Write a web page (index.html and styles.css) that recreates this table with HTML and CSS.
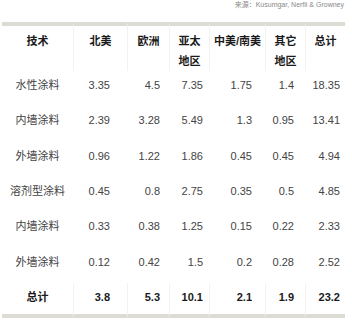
FILE: index.html
```html
<!DOCTYPE html>
<html lang="zh-CN">
<head>
    <meta charset="UTF-8">
    <meta name="viewport" content="width=device-width, initial-scale=1.0">
    <title>涂料市场</title>
    <link rel="stylesheet" href="styles.css">
</head>
<body>
    <div class="source">来源：Kusumgar, Nerfli &amp; Growney</div>
    <table class="market">
        <colgroup>
            <col class="c-tech">
            <col class="c-na">
            <col class="c-eu">
            <col class="c-ap">
            <col class="c-la">
            <col class="c-ot">
            <col class="c-sum">
        </colgroup>
        <thead>
            <tr>
                <th>技术</th>
                <th>北美</th>
                <th>欧洲</th>
                <th>亚太<br>地区</th>
                <th>中美/南美</th>
                <th>其它<br>地区</th>
                <th>总计</th>
            </tr>
        </thead>
        <tbody>
            <tr><td>水性涂料</td><td>3.35</td><td>4.5</td><td>7.35</td><td>1.75</td><td>1.4</td><td>18.35</td></tr>
            <tr><td>内墙涂料</td><td>2.39</td><td>3.28</td><td>5.49</td><td>1.3</td><td>0.95</td><td>13.41</td></tr>
            <tr><td>外墙涂料</td><td>0.96</td><td>1.22</td><td>1.86</td><td>0.45</td><td>0.45</td><td>4.94</td></tr>
            <tr><td>溶剂型涂料</td><td>0.45</td><td>0.8</td><td>2.75</td><td>0.35</td><td>0.5</td><td>4.85</td></tr>
            <tr><td>内墙涂料</td><td>0.33</td><td>0.38</td><td>1.25</td><td>0.15</td><td>0.22</td><td>2.33</td></tr>
            <tr><td>外墙涂料</td><td>0.12</td><td>0.42</td><td>1.5</td><td>0.2</td><td>0.28</td><td>2.52</td></tr>
            <tr class="total"><td>总计</td><td>3.8</td><td>5.3</td><td>10.1</td><td>2.1</td><td>1.9</td><td>23.2</td></tr>
        </tbody>
    </table>
</body>
</html>
```
FILE: styles.css
```css
body {
    margin: 0;
    padding: 0 7px 0 2px;
    background-color: #fff;
    font-family: "Liberation Sans", "Noto Sans CJK SC", sans-serif;
    color: #444;
}
.source {
    font-size: 7px;
    line-height: 10px;
    text-align: right;
    color: #888;
    margin-right: 1px;
    margin-bottom: 12px;
}
.market {
    width: 343px;
    table-layout: fixed;
    border-collapse: separate;
    border-spacing: 0;
    font-size: 11px;
}
.c-tech { width: 71px; }
.c-na { width: 54px; }
.c-eu { width: 42px; }
.c-ap { width: 40px; }
.c-la { width: 56px; }
.c-ot { width: 40px; }
.c-sum { width: 40px; }
.market th {
    border-top: 4px solid #dcdcd5;
    border-left: 1px solid #f2f2ee;
    padding: 5px 0 0;
    line-height: 20px;
    vertical-align: top;
    text-align: center;
    font-weight: bold;
    color: #1a1a1a;
    white-space: nowrap;
}
.market th:first-child {
    border-left: 0;
}
.market tbody tr {
    height: 35.33px;
}
.market td {
    padding: 7px 0 0;
    line-height: 14px;
    vertical-align: top;
    text-align: right;
    white-space: nowrap;
}
.market td:nth-child(1) { text-align: center; }
.market td:nth-child(2) { padding-right: 17px; }
.market td:nth-child(3) { padding-right: 9px; }
.market td:nth-child(4) { padding-right: 6px; }
.market td:nth-child(5) { padding-right: 13px; }
.market td:nth-child(6) { padding-right: 11px; }
.market td:nth-child(7) { padding-right: 5px; }
.market .total td {
    font-weight: bold;
    color: #1a1a1a;
    border-bottom: 4px solid #dcdcd5;
}
.market .total td + td {
    border-left: 1px solid #f2f2ee;
}
```
